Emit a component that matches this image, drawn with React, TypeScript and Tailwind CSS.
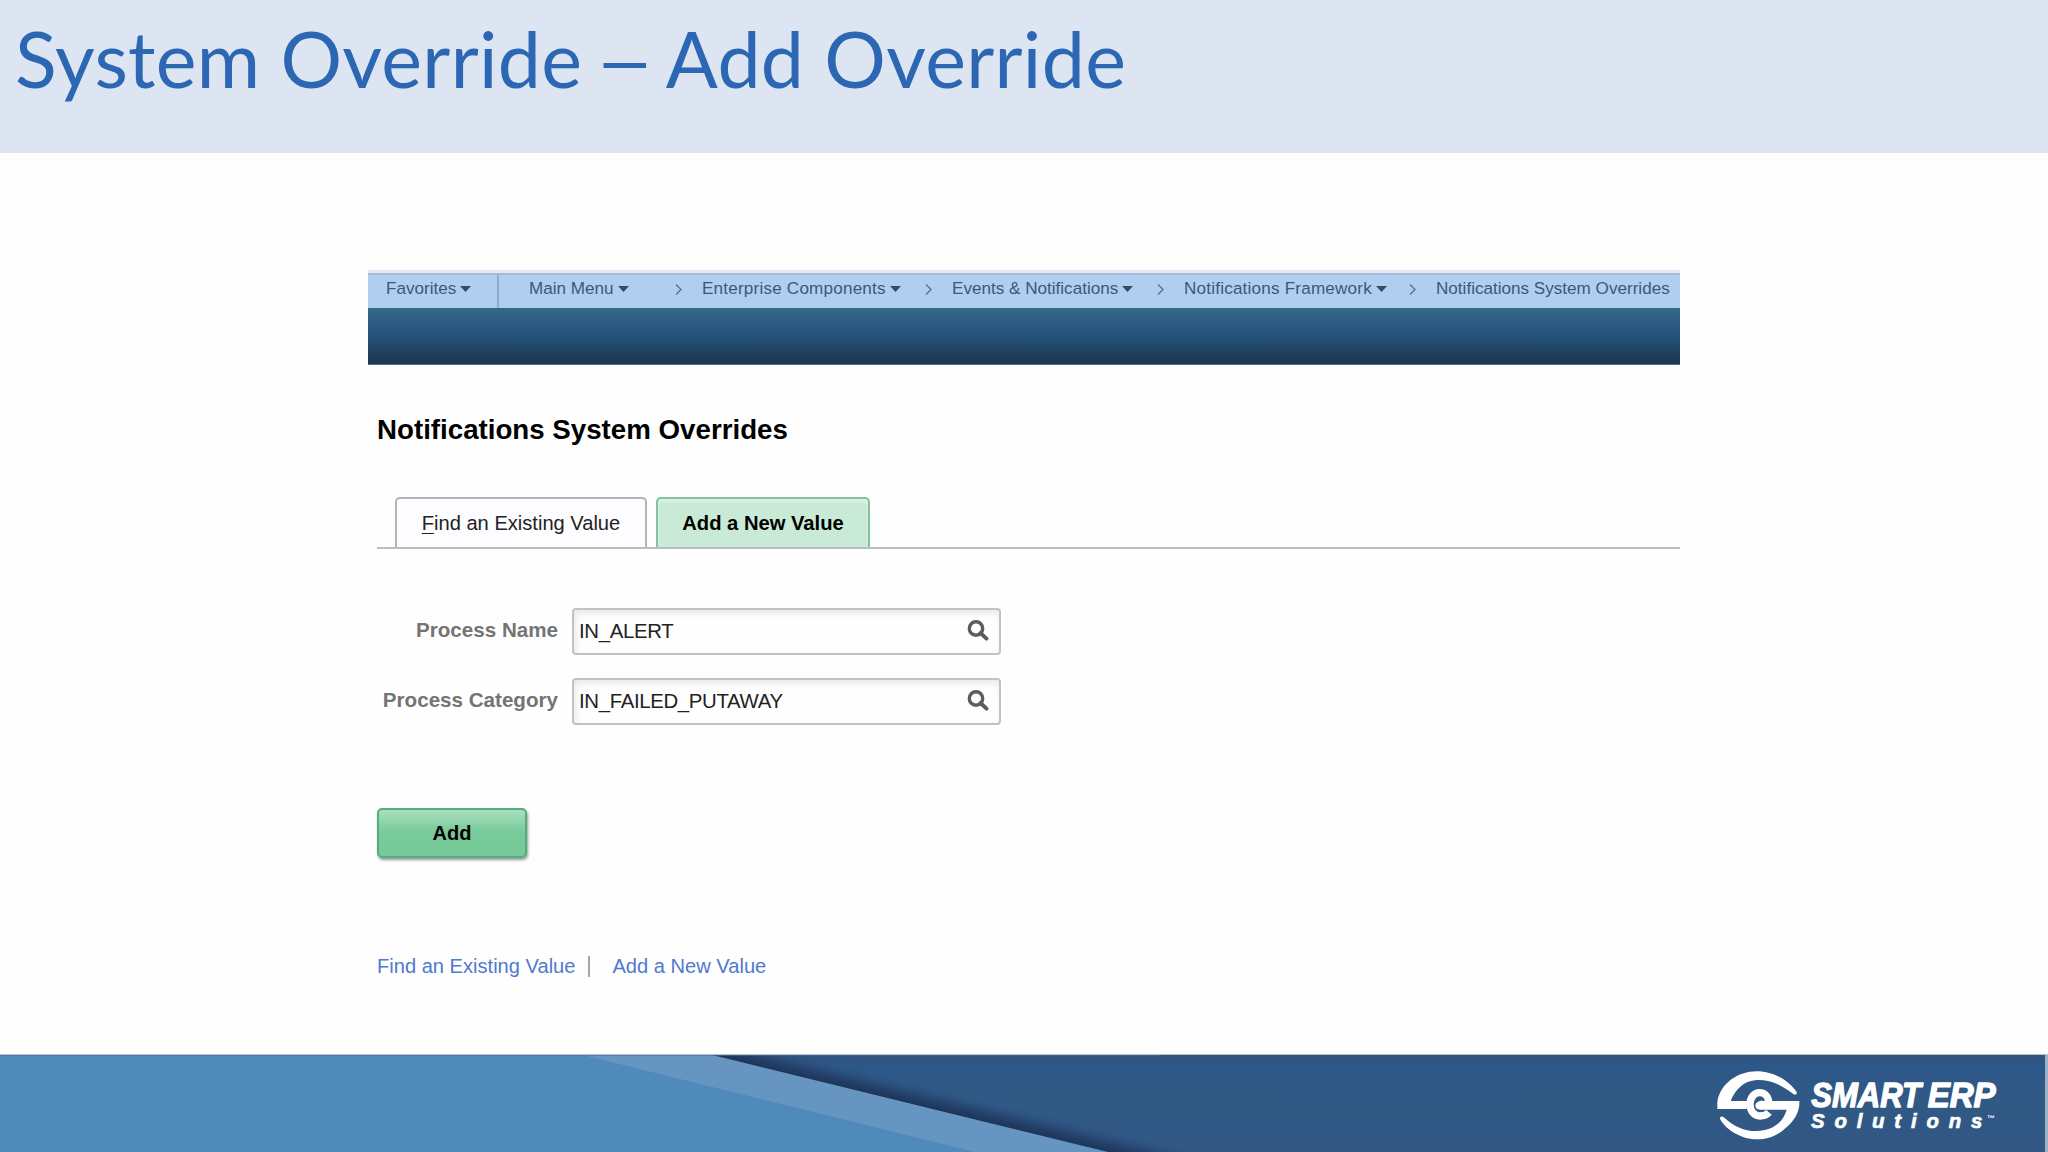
import clsx from "clsx";

interface NavItemProps {
  label: string;
  width: string;
  caret?: boolean;
  chevron?: boolean;
  divider?: boolean;
}

const navItems: NavItemProps[] = [
  { label: "Favorites", width: "w-[113px]", caret: true, divider: true },
  { label: "Main Menu", width: "w-[173px]", caret: true, chevron: true },
  {
    label: "Enterprise Components",
    width: "w-[250px] tracking-[0.2px]",
    caret: true,
    chevron: true,
  },
  {
    label: "Events & Notifications",
    width: "w-[232px]",
    caret: true,
    chevron: true,
  },
  {
    label: "Notifications Framework",
    width: "w-[252px] tracking-[0.2px]",
    caret: true,
    chevron: true,
  },
  { label: "Notifications System Overrides", width: "w-[236px]" },
];

const App = () => {
  return (
    <div className="flex h-[1152px] w-[2048px] flex-col overflow-hidden bg-[#fefefe] font-['Liberation_Sans',Arial,sans-serif]">
      {/* Title */}
      <header className="h-[153px] shrink-0 bg-[#dde4f2] pl-[15px] pt-[13px]">
        <h1 className="whitespace-nowrap font-['Lato',sans-serif] text-[77px] leading-[90px] tracking-[0.33px] text-[#2b67b2]">
          System Override{" "}
          <span className="-ml-[8px] mr-[9px] inline-block origin-left scale-x-[1.38]">
            –
          </span>{" "}
          Add Override
        </h1>
      </header>

      <main className="ml-[368px] w-[1312px] flex-1 pt-[117px]">
        {/* Breadcrumbs */}
        <nav>
          <div className="h-[3px] bg-[#e3eaf6]" />
          <div className="flex h-[35px] items-center border-t-2 border-[#a3b9d6] bg-[#b0cff0] pl-[18px]">
            {navItems.map((item) => (
              <NavItem key={item.label} {...item} />
            ))}
          </div>
          <div className="h-[57px] border-b border-[#4f6f94] bg-linear-to-b from-[#356889] via-[#24527a] to-[#1c364f]" />
        </nav>

        <section className="pl-[9px]">
          <h2 className="mt-[48px] whitespace-nowrap text-[27.7px] font-bold leading-[34px] text-black">
            Notifications System Overrides
          </h2>

          {/* Tabs */}
          <div className="mt-[50px] flex h-[52px] gap-[9px] border-b-2 border-[#bdbdc1] pl-[18px]">
            <div className="flex h-[50px] w-[252px] items-center justify-center rounded-t-[5px] border-2 border-b-0 border-[#b3b3b8] bg-[#fdfcfe] text-[20.1px] text-[#222]">
              <span>
                <span className="underline decoration-1 underline-offset-[3px]">
                  F
                </span>
                ind an Existing Value
              </span>
            </div>
            <div className="flex h-[50px] w-[214px] items-center justify-center rounded-t-[5px] border-2 border-b-0 border-[#83c3a4] bg-[#c9ead6] text-[20.2px] font-bold text-black shadow-[inset_0_3px_3px_#dff3e7]">
              Add a New Value
            </div>
          </div>

          {/* Search fields */}
          <div className="mt-[59px] flex flex-col gap-[23px]">
            <Field label="Process Name" value="IN_ALERT" />
            <Field label="Process Category" value="IN_FAILED_PUTAWAY" />
          </div>

          <button className="mt-[83px] block h-[50px] w-[150px] rounded-[5px] border-2 border-[#58aa80] bg-linear-to-b from-[#a9dfc0] via-[#7acb9b] via-45% to-[#75c997] text-[20px] font-bold text-black shadow-[1px_2px_3px_#8d9a92]">
            Add
          </button>

          {/* Links */}
          <div className="mt-[94px] flex h-[28px] items-center text-[20.1px] text-[#5079d0]">
            <a>Find an Existing Value</a>
            <span className="ml-[13px] h-[21px] w-[2px] bg-[#aaa3a6]" />
            <a className="ml-[22px]">Add a New Value</a>
          </div>
        </section>
      </main>

      <Footer />
    </div>
  );
};

const NavItem = ({ label, width, caret, chevron, divider }: NavItemProps) => (
  <div
    className={clsx(
      "flex h-[33px] shrink-0 items-center whitespace-nowrap pb-[5px] text-[17.1px] text-[#3c5879]",
      width,
      divider && "mr-[30px] border-r-2 border-[#8fabce]"
    )}
  >
    {label}
    {caret && (
      <svg className="ml-[4px] h-[6px] w-[11px]" viewBox="0 0 11 6">
        <path d="M0 0H11L5.5 6Z" fill="#3b4b5d" />
      </svg>
    )}
    {chevron && (
      <svg className="ml-auto mr-[20px] h-[11px] w-[7px]" viewBox="0 0 7 11">
        <path d="M1 0.5L6 5.5L1 10.5" fill="none" stroke="#54708f" strokeWidth="1.3" />
      </svg>
    )}
  </div>
);

interface FieldProps {
  label: string;
  value: string;
}

const Field = ({ label, value }: FieldProps) => (
  <div className="flex h-[47px] items-center">
    <label className="w-[181px] whitespace-nowrap pb-[3px] text-right text-[20.6px] font-bold text-[#747474]">
      {label}
    </label>
    <div className="ml-[14px] flex h-[47px] w-[429px] items-center justify-between rounded-[4px] border-2 border-[#c3c1c4] bg-[#fefefe] pl-[5px] pr-[10px] text-[20.4px] tracking-[-0.35px] text-[#222] shadow-[inset_2px_4px_6px_#e9e8ec]">
      {value}
      <svg className="mb-[2px] h-[21px] w-[22px]" viewBox="0 0 22 21">
        <circle cx="9" cy="8.5" r="6.7" fill="none" stroke="#5c5c5c" strokeWidth="3.4" />
        <path d="M13.5 13L19.5 18.7" stroke="#5c5c5c" strokeWidth="3.8" strokeLinecap="round" />
      </svg>
    </div>
  </div>
);

const Footer = () => (
  <footer className="relative h-[98px] shrink-0 border-t border-[#b5c3d3]">
    {/* Diagonal bands */}
    <svg className="block h-[97px] w-[2048px]" viewBox="0 0 2048 97">
      <defs>
        <linearGradient id="base" x1="0" y1="0" x2="0" y2="1">
          <stop offset="0" stopColor="#34527b" />
          <stop offset="0.08" stopColor="#2d5789" />
          <stop offset="0.5" stopColor="#305984" />
          <stop offset="1" stopColor="#325784" />
        </linearGradient>
        <linearGradient id="shade" gradientUnits="userSpaceOnUse" x1="900" y1="46" x2="905.4" y2="24">
          <stop offset="0" stopColor="#1d3557" />
          <stop offset="0.4" stopColor="#23406a" stopOpacity="0.85" />
          <stop offset="1" stopColor="#2f5785" stopOpacity="0" />
        </linearGradient>
      </defs>
      <rect width="2048" height="97" fill="url(#base)" />
      <path d="M712 0H810L1206 97H1107Z" fill="url(#shade)" />
      <path d="M0 0H712L1108 97H0Z" fill="#6795c2" />
      <path d="M0 0H583L975 97H0Z" fill="#4e8aba" />
      <rect width="1160" height="1" fill="#476f9a" opacity="0.6" />
      <rect x="2045" width="3" height="97" fill="#9db2c8" />
    </svg>
    <div className="absolute left-[1710px] top-[7px]">
      <Logo />
    </div>
  </footer>
);

const Logo = () => (
  <svg
    className="h-[84px] w-[300px] font-['Liberation_Sans',Arial,sans-serif]"
    viewBox="0 0 900 252"
    fill="#fff"
  >
    <path d="M22 141V120C30 64 85 28 140 28C195 28 240 60 260 90C262 98 256 99 250 96C215 68 180 53 140 54C100 56 75 85 62 117H112L110 141Z" />
    <path d="M160 117H268C270 150 252 176 227 198C197 226 165 233 140 232C90 231 45 200 30 170C30 161 37 162 43 167C75 195 105 208 140 207C185 205 218 185 230 143H150C134 142 132 126 143 120C148 117 156 113 160 117Z" />
    <path
      d="M176 120C175 101 162 92 148 92C132 92 120 108 120 127C120 147 133 162 150 162C162 162 170 159 177 151"
      fill="none"
      stroke="#fff"
      strokeWidth="22"
    />
    <g
      fontWeight="bold"
      fontStyle="italic"
      stroke="#fff"
      strokeWidth="4"
      strokeLinejoin="round"
    >
      <text x="304" y="134" fontSize="103" textLength="329" lengthAdjust="spacingAndGlyphs">
        SMART
      </text>
      <text x="653" y="134" fontSize="103" textLength="204" lengthAdjust="spacingAndGlyphs">
        ERP
      </text>
      <text x="303" y="197" fontSize="61" letterSpacing="29.5" strokeWidth="2">
        Solutions
      </text>
    </g>
    <text x="831" y="178" fontSize="24" fontWeight="bold">
      ™
    </text>
  </svg>
);

export default App;
